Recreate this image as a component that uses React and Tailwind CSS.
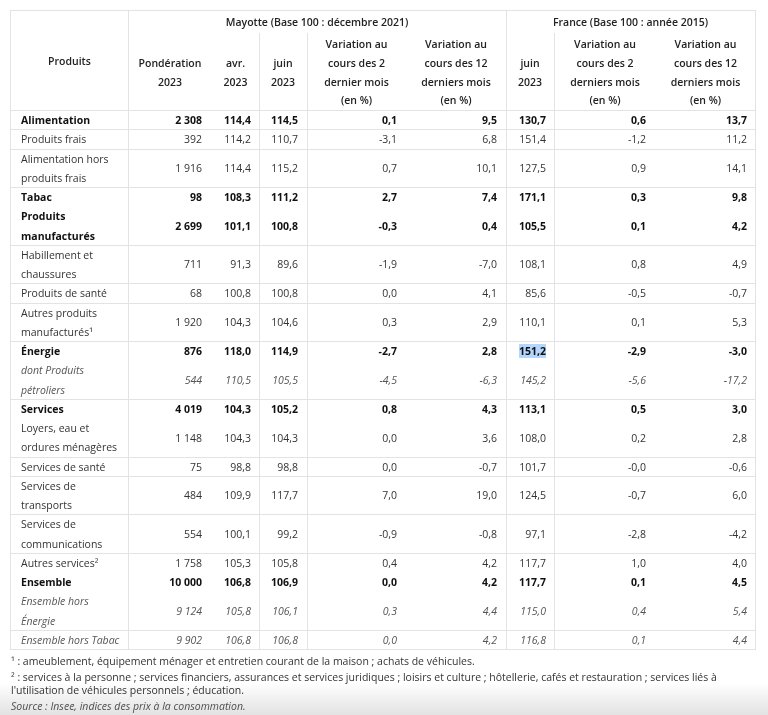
const S = {
  none: "",
  l: "shadow-[inset_1px_0_0_#e3e3e3]",
  b: "shadow-[inset_0_-1px_0_#e3e3e3]",
  lb: "shadow-[inset_1px_0_0_#e3e3e3,inset_0_-1px_0_#e3e3e3]",
};

const leftCols = [1, 3, 4, 6, 7];

const lineCls = (left, bottom) =>
  left && bottom ? S.lb : left ? S.l : bottom ? S.b : S.none;

const rows = [
  { label: ["Alimentation"], t: "b", line: true, v: ["2 308", "114,4", "114,5", "0,1", "9,5", "130,7", "0,6", "13,7"] },
  { label: ["Produits frais"], t: "n", line: true, v: ["392", "114,2", "110,7", "-3,1", "6,8", "151,4", "-1,2", "11,2"] },
  { label: ["Alimentation hors", "produits frais"], t: "n", line: true, v: ["1 916", "114,4", "115,2", "0,7", "10,1", "127,5", "0,9", "14,1"] },
  { label: ["Tabac"], t: "b", line: false, v: ["98", "108,3", "111,2", "2,7", "7,4", "171,1", "0,3", "9,8"] },
  { label: ["Produits", "manufacturés"], t: "b", line: true, v: ["2 699", "101,1", "100,8", "-0,3", "0,4", "105,5", "0,1", "4,2"] },
  { label: ["Habillement et", "chaussures"], t: "n", line: true, v: ["711", "91,3", "89,6", "-1,9", "-7,0", "108,1", "0,8", "4,9"] },
  { label: ["Produits de santé"], t: "n", line: true, v: ["68", "100,8", "100,8", "0,0", "4,1", "85,6", "-0,5", "-0,7"] },
  { label: ["Autres produits", "manufacturés¹"], t: "n", line: true, v: ["1 920", "104,3", "104,6", "0,3", "2,9", "110,1", "0,1", "5,3"] },
  { label: ["Énergie"], t: "b", line: false, v: ["876", "118,0", "114,9", "-2,7", "2,8", "151,2", "-2,9", "-3,0"], hl: 5 },
  { label: ["dont Produits", "pétroliers"], t: "i", line: true, v: ["544", "110,5", "105,5", "-4,5", "-6,3", "145,2", "-5,6", "-17,2"] },
  { label: ["Services"], t: "b", line: false, v: ["4 019", "104,3", "105,2", "0,8", "4,3", "113,1", "0,5", "3,0"] },
  { label: ["Loyers, eau et", "ordures ménagères"], t: "n", line: true, v: ["1 148", "104,3", "104,3", "0,0", "3,6", "108,0", "0,2", "2,8"] },
  { label: ["Services de santé"], t: "n", line: true, v: ["75", "98,8", "98,8", "0,0", "-0,7", "101,7", "-0,0", "-0,6"] },
  { label: ["Services de", "transports"], t: "n", line: true, v: ["484", "109,9", "117,7", "7,0", "19,0", "124,5", "-0,7", "6,0"] },
  { label: ["Services de", "communications"], t: "n", line: true, v: ["554", "100,1", "99,2", "-0,9", "-0,8", "97,1", "-2,8", "-4,2"] },
  { label: ["Autres services²"], t: "n", line: false, v: ["1 758", "105,3", "105,8", "0,4", "4,2", "117,7", "1,0", "4,0"] },
  { label: ["Ensemble"], t: "b", line: false, v: ["10 000", "106,8", "106,9", "0,0", "4,2", "117,7", "0,1", "4,5"] },
  { label: ["Ensemble hors", "Énergie"], t: "i", line: true, v: ["9 124", "105,8", "106,1", "0,3", "4,4", "115,0", "0,4", "5,4"] },
  { label: ["Ensemble hors Tabac"], t: "i", line: true, v: ["9 902", "106,8", "106,8", "0,0", "4,2", "116,8", "0,1", "4,4"] },
];

const typeCls = {
  b: "font-bold text-[#111]",
  n: "text-[#333]",
  i: "italic text-[#555]",
};

const numPad = ["pr-[10px]", "pr-[8px]", "pr-[9px]", "pr-[9px]", "pr-[9px]", "pr-[8px]", "pr-[10px]", "pr-[8px]"];

const header2 = [
  ["Pondération", "2023"],
  ["avr.", "2023"],
  ["juin", "2023"],
  ["Variation au", "cours des 2", "dernier mois", "(en %)"],
  ["Variation au", "cours des 12", "derniers mois", "(en %)"],
  ["juin", "2023"],
  ["Variation au", "cours des 2", "derniers mois", "(en %)"],
  ["Variation au", "cours des 12", "derniers mois", "(en %)"],
];

const Lines = ({ lines }) =>
  lines.map((l, i) => (
    <span key={i}>
      {i > 0 && <br />}
      {l}
    </span>
  ));

export default function App() {
  return (
    <div className="relative h-[715px] overflow-hidden bg-white font-['Open_Sans',sans-serif] text-[10.5px] text-[#333]">
      <div className="ml-[10px] mt-[10px] w-[746px] border border-b-0 border-[#e3e3e3]">
        <table className="w-[744px] table-fixed border-separate border-spacing-0">
          <colgroup>
            <col className="w-[117px]" />
            <col className="w-[84px]" />
            <col className="w-[47px]" />
            <col className="w-[48px]" />
            <col className="w-[99px]" />
            <col className="w-[100px]" />
            <col className="w-[48px]" />
            <col className="w-[102px]" />
            <col className="w-[99px]" />
          </colgroup>
          <thead>
            <tr>
              <th rowSpan={2} className={`pt-[2px] align-middle text-center font-semibold text-[#222] ${S.b}`}>
                Produits
              </th>
              <th colSpan={5} className={`h-[22px] p-0 pt-[1px] text-center align-middle font-semibold leading-[19px] text-[#222] ${S.l}`}>
                Mayotte (Base 100 : décembre 2021)
              </th>
              <th colSpan={3} className={`h-[22px] p-0 pt-[1px] text-center align-middle font-semibold leading-[19px] text-[#222] ${S.l}`}>
                France (Base 100 : année 2015)
              </th>
            </tr>
            <tr>
              {header2.map((h, i) => (
                <th
                  key={i}
                  className={`h-[78px] whitespace-nowrap px-0 pt-[2px] pb-[1px] text-center align-middle font-semibold leading-[18.75px] text-[#222] ${lineCls(leftCols.includes(i + 1), true)}`}
                >
                  <Lines lines={h} />
                </th>
              ))}
            </tr>
          </thead>
          <tbody>
            {rows.map((r, ri) => (
              <tr key={ri} className={`leading-[19.25px] ${typeCls[r.t]}`}>
                <td className={`whitespace-nowrap p-0 pl-[10px] align-middle ${lineCls(false, r.line)}`}>
                  <Lines lines={r.label} />
                </td>
                {r.v.map((v, ci) => (
                  <td
                    key={ci}
                    className={`whitespace-nowrap p-0 text-right align-middle ${numPad[ci]} ${lineCls(leftCols.includes(ci + 1), r.line)}`}
                  >
                    {r.hl === ci ? <span className="bg-[#b4d5fd]">{v}</span> : v}
                  </td>
                ))}
              </tr>
            ))}
          </tbody>
        </table>
      </div>

      <div className="ml-[11px] mt-[5px] w-[752px] leading-[13.5px] text-[#333]">
        <p className="mb-[2px]">¹ : ameublement, équipement ménager et entretien courant de la maison ; achats de véhicules.</p>
        <p className="mb-[2px] whitespace-nowrap">
          ² : services à la personne ; services financiers, assurances et services juridiques ; loisirs et culture ; hôtellerie, cafés et restauration ; services liés à
          <br />
          l'utilisation de véhicules personnels ; éducation.
        </p>
        <p className="italic text-[#555]">Source : Insee, indices des prix à la consommation.</p>
      </div>

      <div className="pointer-events-none absolute bottom-0 left-0 right-0 h-[32px] bg-linear-to-b from-white to-[#e2e2e2] mix-blend-multiply" />
    </div>
  );
}
